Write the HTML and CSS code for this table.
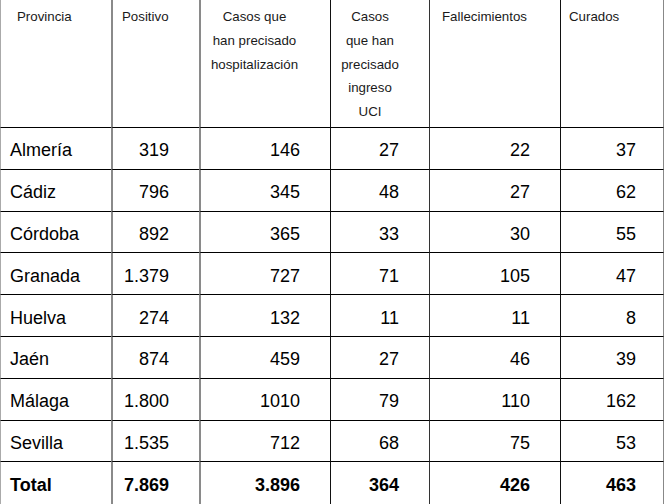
FILE: index.html
```html
<!DOCTYPE html>
<html lang="es">
<head>
<meta charset="utf-8">
<title>Casos por provincia</title>
<link rel="stylesheet" href="styles.css">
</head>
<body>
<div class="table">
  <div class="cell head c1 left">Provincia</div>
  <div class="cell head c2 left">Positivo</div>
  <div class="cell head c3 center">Casos que<br>han precisado<br>hospitalización</div>
  <div class="cell head c4 center">Casos<br>que han<br>precisado<br>ingreso<br>UCI</div>
  <div class="cell head c5 left">Fallecimientos</div>
  <div class="cell head c6 left">Curados</div>

  <div class="cell c1 name">Almería</div><div class="cell c2 num">319</div><div class="cell c3 num">146</div><div class="cell c4 num">27</div><div class="cell c5 num">22</div><div class="cell c6 num">37</div>
  <div class="cell c1 name">Cádiz</div><div class="cell c2 num">796</div><div class="cell c3 num">345</div><div class="cell c4 num">48</div><div class="cell c5 num">27</div><div class="cell c6 num">62</div>
  <div class="cell c1 name">Córdoba</div><div class="cell c2 num">892</div><div class="cell c3 num">365</div><div class="cell c4 num">33</div><div class="cell c5 num">30</div><div class="cell c6 num">55</div>
  <div class="cell c1 name">Granada</div><div class="cell c2 num">1.379</div><div class="cell c3 num">727</div><div class="cell c4 num">71</div><div class="cell c5 num">105</div><div class="cell c6 num">47</div>
  <div class="cell c1 name">Huelva</div><div class="cell c2 num">274</div><div class="cell c3 num">132</div><div class="cell c4 num">11</div><div class="cell c5 num">11</div><div class="cell c6 num">8</div>
  <div class="cell c1 name">Jaén</div><div class="cell c2 num">874</div><div class="cell c3 num">459</div><div class="cell c4 num">27</div><div class="cell c5 num">46</div><div class="cell c6 num">39</div>
  <div class="cell c1 name">Málaga</div><div class="cell c2 num">1.800</div><div class="cell c3 num">1010</div><div class="cell c4 num">79</div><div class="cell c5 num">110</div><div class="cell c6 num">162</div>
  <div class="cell c1 name">Sevilla</div><div class="cell c2 num">1.535</div><div class="cell c3 num">712</div><div class="cell c4 num">68</div><div class="cell c5 num">75</div><div class="cell c6 num">53</div>
  <div class="cell c1 name total">Total</div><div class="cell c2 num total">7.869</div><div class="cell c3 num total">3.896</div><div class="cell c4 num total">364</div><div class="cell c5 num total">426</div><div class="cell c6 num total">463</div>
</div>
</body>
</html>
```
FILE: styles.css
```css
html, body {
  margin: 0;
  padding: 0;
  background: #fff;
}
body {
  width: 664px;
  height: 504px;
  overflow: hidden;
  font-family: "Liberation Sans", Arial, sans-serif;
  color: #000;
}
.table {
  display: grid;
  grid-template-columns: 111px 88px 131px 99px 131px 104px;
  grid-template-rows: 128px repeat(8, 41.8px) 42px;
}
.cell {
  box-sizing: border-box;
  border-bottom: 1px solid #000;
  display: flex;
  align-items: center;
  padding-top: 5px;
  font-size: 18px;
}
.c1 { border-left: 1px solid #aaa; padding-left: 9px; }
.c2 { border-left: 2px solid #8a8a8a; }
.c3 { border-left: 2px solid #8a8a8a; }
.c4 { border-left: 1px solid #111; }
.c5 { border-left: 1px solid #333; }
.c6 { border-left: 1px solid #111; border-right: 1px solid #888; }

.head {
  display: block;
  font-size: 13.3px;
  line-height: 23.75px;
  padding-top: 5px;
  color: #1a1a1a;
}
.head.c1 { padding-left: 16px; }
.head.c2 { padding-left: 9px; }
.head.c3 { text-align: center; padding-right: 22px; }
.head.c4 { text-align: center; padding-right: 20px; }
.head.c5 { padding-left: 12px; }
.head.c6 { padding-left: 8px; }

.num {
  justify-content: flex-end;
  padding-right: 30px;
}
.num.c6 { padding-right: 27px; }
.total {
  font-weight: bold;
  border-bottom: none;
}
```
